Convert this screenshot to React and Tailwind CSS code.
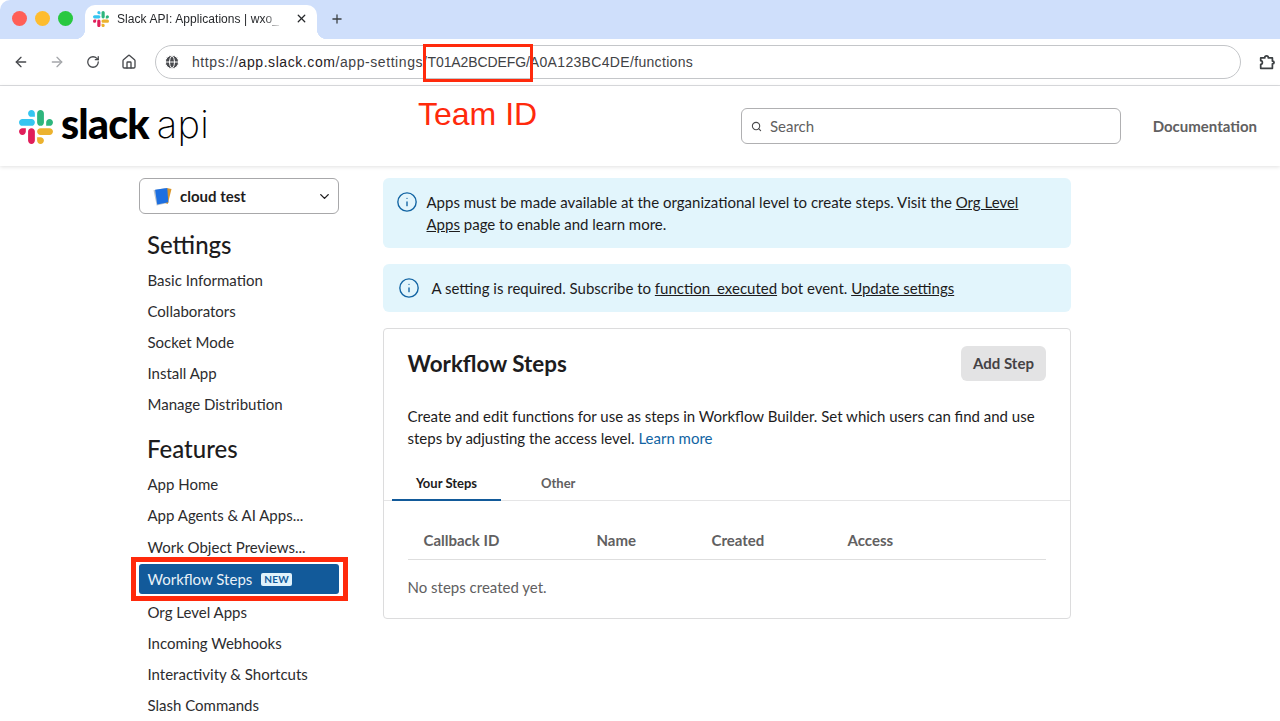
import React from "react";
import { ArrowLeft, ArrowRight, RotateCw, Home, Globe, X, Plus, Search, ChevronDown, Info } from "lucide-react";

function SlackMark({ className }) {
  return (
    <svg viewBox="0 0 2447.6 2452.5" className={className}>
      <path d="m897.4 0c-135.3.1-244.8 109.9-244.7 245.2-.1 135.3 109.5 245.1 244.8 245.2h244.8v-245.1c.1-135.3-109.5-245.1-244.9-245.3.1 0 .1 0 0 0m0 654h-652.6c-135.3.1-244.9 109.9-244.8 245.2-.2 135.3 109.4 245.1 244.7 245.3h652.7c135.3-.1 244.9-109.9 244.8-245.2.1-135.4-109.5-245.2-244.8-245.3z" fill="#36c5f0" />
      <path d="m2447.6 899.2c.1-135.3-109.5-245.1-244.8-245.2-135.3.1-244.9 109.9-244.8 245.2v245.3h244.8c135.3-.1 244.9-109.9 244.8-245.3zm-652.7 0v-654c.1-135.2-109.4-245-244.7-245.2-135.3.1-244.9 109.9-244.8 245.2v654c-.2 135.3 109.4 245.1 244.7 245.3 135.3-.1 244.9-109.9 244.8-245.3z" fill="#2eb67d" />
      <path d="m1550.1 2452.5c135.3-.1 244.9-109.9 244.8-245.2.1-135.3-109.5-245.1-244.8-245.2h-244.8v245.2c-.1 135.2 109.5 245 244.8 245.2zm0-654.1h652.7c135.3-.1 244.9-109.9 244.8-245.2.2-135.3-109.4-245.1-244.7-245.3h-652.7c-135.3.1-244.9 109.9-244.8 245.2-.1 135.4 109.4 245.2 244.7 245.3z" fill="#ecb22e" />
      <path d="m0 1553.2c-.1 135.3 109.5 245.1 244.8 245.2 135.3-.1 244.9-109.9 244.8-245.2v-245.2h-244.8c-135.3.1-244.9 109.9-244.8 245.2zm652.7 0v654c-.2 135.3 109.4 245.1 244.7 245.3 135.3-.1 244.9-109.9 244.8-245.2v-653.9c.2-135.3-109.4-245.1-244.7-245.3-135.4 0-244.9 109.8-244.8 245.1 0 0 0 .1 0 .1z" fill="#e01e5a" />
    </svg>
  );
}

function NavItem({ children, tall }) {
  return <a className={`flex items-center pl-[8.5px] text-[15px] text-[#2c2c2e] truncate ${tall ? "h-[32px]" : "h-[31px]"}`}>{children}</a>;
}

function Banner({ children, className, iconClass }) {
  return (
    <div className={`flex bg-[#e2f5fc] rounded-[6px] text-[15px] leading-[22px] text-[#1d1c1d] ${className}`}>
      <Info className={`shrink-0 text-[#1264a3] ${iconClass}`} strokeWidth={1.5} />
      <div>{children}</div>
    </div>
  );
}

export default function App() {
  return (
    <div className="relative h-[721px] w-[1280px] overflow-hidden bg-white font-['Lato','Noto_Sans',sans-serif]">
      {/* Tab strip */}
      <div className="flex h-[39px] items-end rounded-tl-[10px] bg-[#cfdffb] font-['Liberation_Sans',sans-serif]">
        <div className="ml-[12px] mb-[13px] flex gap-[8px]">
          <span className="h-[15px] w-[15px] rounded-full bg-[#ff5f57]" />
          <span className="h-[15px] w-[15px] rounded-full bg-[#febc2e]" />
          <span className="h-[15px] w-[15px] rounded-full bg-[#28c840]" />
        </div>
        <div className="relative ml-[12px] flex h-[34px] w-[232px] items-center rounded-t-[10px] bg-white pb-[7px] pl-[8px] before:absolute before:-left-[10px] before:bottom-0 before:h-[10px] before:w-[10px] before:bg-[radial-gradient(circle_at_0_0,transparent_10px,white_10.5px)] after:absolute after:-right-[10px] after:bottom-0 after:h-[10px] after:w-[10px] after:bg-[radial-gradient(circle_at_100%_0,transparent_10px,white_10.5px)]">
          <SlackMark className="h-[16px] w-[16px] shrink-0" />
          <span className="ml-[8px] w-[166px] shrink-0 overflow-hidden whitespace-nowrap text-[12px] tracking-[0.07px] text-[#26282b] [mask-image:linear-gradient(to_right,black_88%,transparent)]">Slack API: Applications | wxo_</span>
          <X className="ml-[12px] h-[13px] w-[13px] shrink-0 text-[#26282b]" strokeWidth={2.4} />
        </div>
        <Plus className="ml-[13px] mb-[13px] h-[14px] w-[14px] text-[#3c4043]" strokeWidth={2.2} />
      </div>

      {/* Toolbar */}
      <div className="flex h-[47px] items-center border-b border-[#dcdde0] bg-white font-['Liberation_Sans',sans-serif] pl-[13px]">
        <ArrowLeft className="h-[16px] w-[16px] text-[#47494d]" strokeWidth={2} />
        <ArrowRight className="ml-[20px] h-[16px] w-[16px] text-[#a5a7aa]" strokeWidth={2} />
        <RotateCw className="ml-[21px] h-[14px] w-[14px] text-[#47494d]" strokeWidth={2.2} />
        <Home className="ml-[21px] h-[16px] w-[16px] text-[#47494d]" strokeWidth={2} />
        <div className="ml-[18px] flex h-[34px] w-[1086px] items-center rounded-full border border-[#c4c6c9] pl-[8px]">
          <Globe className="h-[16px] w-[16px] fill-[#47494d] text-white" strokeWidth={1.5} />
          <span className="ml-[12px] whitespace-pre text-[14px] text-[#3f4245]">
            <span className="tracking-[0.57px]">https://<span className="text-[#1f2023]">app.slack.com</span>/app-settings/</span>
            <span className="tracking-[-0.1px]">T01A2BCDEFG/</span>
            <span className="tracking-[0.33px]">A0A123BC4DE/functions</span>
          </span>
        </div>
        <svg viewBox="0 0 20 20" className="ml-[17px] h-[18px] w-[18px] text-[#3c4043]" fill="none" stroke="currentColor" strokeWidth="1.9" strokeLinejoin="round">
          <path d="M3 5.5 H7.5 C7.5 2.5 11.5 2.5 11.5 5.5 H16 V9 C18.5 9 18.5 12 16 12 V17 H3 V12.5 C5.5 12.5 5.5 8.5 3 8.5 Z" />
        </svg>
      </div>

      {/* Site header */}
      <header className="flex h-[80px] items-center bg-white pl-[19px] pr-[23px] shadow-[0_1px_4px_rgba(0,0,0,0.12)]">
        <div className="flex w-[200px] shrink-0 items-center">
          <SlackMark className="mt-[2px] h-[34px] w-[34px] shrink-0" />
          <span className="ml-[8px] pb-[5px] text-[41px] font-black leading-none tracking-[-0.8px] text-black">slack</span>
          <span className="ml-[8px] pb-[5px] font-['Inter'] text-[38px] font-extralight leading-none tracking-[0.3px] text-black">api</span>
        </div>
        <div className="ml-[522px] flex h-[36px] w-[380px] items-center rounded-[6px] border border-[#b0b0b2] pl-[9px]">
          <Search className="h-[11px] w-[11px] text-[#4a4a4c]" strokeWidth={2.4} />
          <span className="ml-[8px] text-[15px] text-[#616061]">Search</span>
        </div>
        <span className="ml-auto text-[15px] font-bold text-[#616061]">Documentation</span>
      </header>

      <div className="flex pl-[139px] pt-[12px]">
        {/* Sidebar */}
        <aside className="w-[200px] shrink-0">
          <div className="flex h-[36px] items-center rounded-[6px] border border-[#a8a8aa] pl-[13px] pr-[6px]">
            <svg viewBox="0 0 18 18" className="h-[19px] w-[19px] shrink-0">
              <path d="M0.5 3 L12 1 L15 15 L3.5 17.5 Z" fill="#b9c4cf" />
              <path d="M13 1 L17.5 2 L14 16 L11 15 Z" fill="#d9962b" />
              <path d="M2 2.5 L13.5 1 L14.5 14.5 L4 16.5 Z" fill="#1d6fe0" />
            </svg>
            <span className="ml-[8px] text-[15px] font-bold text-[#1d1c1d]">cloud test</span>
            <ChevronDown className="ml-auto h-[15px] w-[15px] text-[#1d1c1d]" strokeWidth={2.2} />
          </div>
          <h2 className="mt-[14px] mb-[4px] h-[33px] pl-[8px] text-[24px] font-medium leading-[33px] text-[#1d1c1d]">Settings</h2>
          <nav>
            <NavItem>Basic Information</NavItem>
            <NavItem>Collaborators</NavItem>
            <NavItem>Socket Mode</NavItem>
            <NavItem>Install App</NavItem>
            <NavItem>Manage Distribution</NavItem>
          </nav>
          <h2 className="mt-[12px] mb-[4px] h-[33px] pl-[8px] text-[24px] font-medium leading-[33px] text-[#1d1c1d]">Features</h2>
          <nav>
            <NavItem>App Home</NavItem>
            <NavItem>App Agents &amp; AI Apps...</NavItem>
            <NavItem tall>Work Object Previews...</NavItem>
            <div className="relative mt-[1px]">
              <a className="flex h-[30px] items-center rounded-[3px] bg-[#125a9a] pl-[8.5px] text-[15px] text-[#e8f1f8]">
                Workflow Steps
                <span className="ml-[9px] rounded-[2px] bg-[#e0f2fb] px-[3px] text-[10px] font-bold leading-[13px] tracking-[0.2px] text-[#125a9a]">NEW</span>
              </a>
              <div className="absolute -left-[8px] -top-[7px] h-[44px] w-[217px] border-[5px] border-[#ff2a0c]" />
            </div>
            <div className="h-[3px]" />
            <NavItem>Org Level Apps</NavItem>
            <NavItem>Incoming Webhooks</NavItem>
            <NavItem>Interactivity &amp; Shortcuts</NavItem>
            <NavItem>Slash Commands</NavItem>
          </nav>
        </aside>

        {/* Main */}
        <main className="ml-[44px] w-[688px] shrink-0">
          <Banner className="h-[70px] pl-[13px] pt-[13px] pr-[40px]" iconClass="mr-[8.5px] h-[22px] w-[22px]">
            Apps must be made available at the organizational level to create steps. Visit the <u>Org Level Apps</u> page to enable and learn more.
          </Banner>
          <Banner className="mt-[16px] h-[48px] items-center pl-[15px]" iconClass="mr-[11.5px] h-[22px] w-[22px]">
            <span>A setting is required. Subscribe to <u>function_executed</u> bot event. <u>Update settings</u></span>
          </Banner>

          <section className="mt-[16px] h-[291px] rounded-[4px] border border-[#dcdcdd]">
            <div className="flex items-center justify-between pl-[23.5px] pr-[24px] pt-[17px]">
              <h1 className="text-[22.4px] font-bold leading-[35px] text-[#1d1c1d]">Workflow Steps</h1>
              <button className="h-[35px] w-[85px] rounded-[6px] bg-[#e3e3e4] text-[15px] font-bold text-[#454245]">Add Step</button>
            </div>
            <p className="mt-[24px] px-[23.5px] text-[15px] leading-[22px] text-[#1d1c1d]">
              Create and edit functions for use as steps in Workflow Builder. Set which users can find and use steps by adjusting the access level. <a className="text-[#1264a3]">Learn more</a>
            </p>
            <div className="mt-[17px] flex h-[35px] border-b border-[#e5e5e6] pl-[8px]">
              <div className="-mb-px flex w-[109px] items-center justify-center border-b-2 border-[#125a9a] pt-[2px] text-[13px] font-bold text-[#1d1c1d]">Your Steps</div>
              <div className="ml-[40px] flex items-center pt-[1px] text-[13px] font-bold text-[#616061]">Other</div>
            </div>
            <div className="mx-[24px] mt-[20px] flex h-[39px] items-center border-b border-[#dedede] text-[15px] font-bold text-[#616061]">
              <span className="ml-[15.5px] w-[173px]">Callback ID</span>
              <span className="w-[115px]">Name</span>
              <span className="w-[136px]">Created</span>
              <span>Access</span>
            </div>
            <p className="mt-[16px] px-[23.5px] text-[15px] leading-[22px] text-[#616061]">No steps created yet.</p>
          </section>
        </main>
      </div>

      {/* Annotations */}
      <div className="absolute left-[423px] top-[44px] h-[38px] w-[110px] border-[3px] border-[#ff2a0c]" />
      <div className="absolute left-[418px] top-[95px] font-['Liberation_Sans',sans-serif] text-[32px] leading-[38px] text-[#ff2a0c]">Team ID</div>
    </div>
  );
}
